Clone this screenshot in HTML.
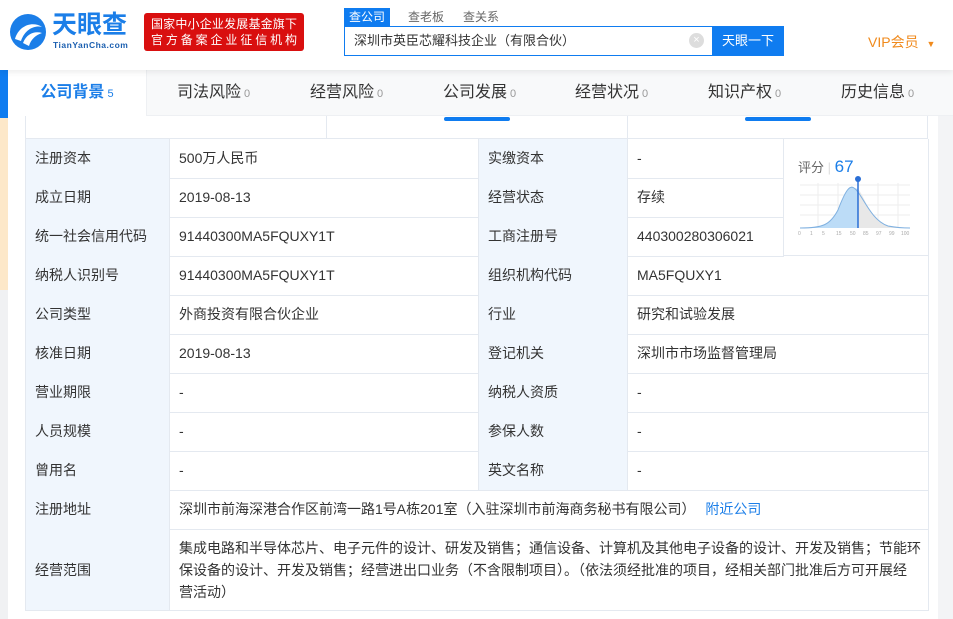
<!DOCTYPE html>
<html><head><meta charset="utf-8"><style>
*{margin:0;padding:0;box-sizing:border-box}
body{width:953px;height:619px;overflow:hidden;background:#f5f6f8;font-family:"Liberation Sans","Noto Sans CJK SC",sans-serif;color:#333;position:relative}
.a{position:absolute}
.hdr{left:0;top:0;width:953px;height:70px;background:#fff;box-shadow:0 2px 6px rgba(0,0,0,.08);z-index:5}
.nav{left:8px;top:70px;width:945px;height:46px;background:#f8f9fa;border-bottom:1px solid #eef0f3}
.tab{position:absolute;top:0;height:46px;line-height:46px;font-size:16px;color:#333}
.tab small{font-size:11px;color:#999;margin-left:3px}
.cell{position:absolute;font-size:14px;line-height:39px;padding-left:9px;border-right:1px solid #e4e9f0;border-bottom:1px solid #e4e9f0;color:#333;white-space:nowrap}
.lb{background:#f0f6fd}
.jl{display:block;text-align:justify;text-align-last:justify;width:146px;white-space:nowrap}
</style></head><body>
<div class="a hdr">
  <svg class="a" style="left:9px;top:13px" width="38" height="38" viewBox="0 0 38 38"><circle cx="19" cy="19" r="18" fill="#1b7ee8"/><path d="M6 26 C10 12 24 8 33 14 C26 12 16 16 12 28Z" fill="#fff"/><path d="M14 30 C18 20 26 18 33 20 C27 22 22 26 20 33Z" fill="#fff"/></svg>
  <div class="a" style="left:52px;top:11px;font-size:25px;font-weight:bold;color:#1b7ee8;line-height:28px">天眼查</div>
  <div class="a" style="left:53px;top:40px;font-size:8.5px;color:#1b5fb0;font-weight:bold;letter-spacing:0.5px">TianYanCha.com</div>
  <div class="a" style="left:144px;top:13px;width:160px;height:38px;background:#d90f0f;border-radius:3px;color:#fff;font-size:12px;line-height:16px;padding:3px 0 0 7px"><span class="jl">国家中小企业发展基金旗下</span><span class="jl">官方备案企业征信机构</span></div>
  <div class="a" style="left:344px;top:8px;width:46px;height:18px;background:#0f7cf0;color:#fff;font-size:12px;text-align:center;line-height:18px">查公司</div>
  <div class="a" style="left:408px;top:8px;font-size:12px;color:#666;line-height:18px">查老板</div>
  <div class="a" style="left:463px;top:8px;font-size:12px;color:#666;line-height:18px">查关系</div>
  <div class="a" style="left:344px;top:26px;width:370px;height:30px;border:1px solid #0f7cf0;background:#fff;font-size:13px;line-height:28px;padding-left:9px">深圳市英臣芯耀科技企业（有限合伙）</div>
  <div class="a" style="left:689px;top:33px;width:15px;height:15px;border-radius:50%;background:#ddd;color:#fff;font-size:11px;line-height:15px;text-align:center">×</div>
  <div class="a" style="left:712px;top:26px;width:72px;height:30px;background:#0f7cf0;color:#fff;font-size:13px;line-height:30px;text-align:center">天眼一下</div>
  <div class="a" style="left:868px;top:32px;font-size:14px;color:#f08a1c">VIP会员 <span style="font-size:9px;margin-left:4px">▼</span></div>
</div>
<div class="a" style="left:0;top:70px;width:8px;height:48px;background:#0f7cf0"></div>
<div class="a" style="left:0;top:118px;width:8px;height:172px;background:#fde8c9"></div>
<div class="a" style="left:0;top:290px;width:8px;height:329px;background:#f0f1f3"></div>
<div class="a" style="left:8px;top:116px;width:930px;height:503px;background:#fff"></div>
<div class="a" style="left:938px;top:70px;width:15px;height:549px;background:#f3f4f6"></div>
<div class="a nav">
  <div class="tab" style="left:0;width:139px;background:#fff;text-align:center;color:#1b7ee8;font-weight:bold;border-right:1px solid #eef0f3">公司背景<small style="color:#1b7ee8;font-weight:normal">5</small></div>
  <div class="tab" style="left:169px">司法风险<small>0</small></div>
  <div class="tab" style="left:302px">经营风险<small>0</small></div>
  <div class="tab" style="left:435px">公司发展<small>0</small></div>
  <div class="tab" style="left:567px">经营状况<small>0</small></div>
  <div class="tab" style="left:700px">知识产权<small>0</small></div>
  <div class="tab" style="left:833px">历史信息<small>0</small></div>
</div>
<div class="a" style="left:25px;top:116px;width:903px;height:23px;border-left:1px solid #e4e9f0;border-right:1px solid #e4e9f0;border-bottom:1px solid #e4e9f0"></div>
<div class="a" style="left:326px;top:116px;width:1px;height:23px;background:#e4e9f0"></div>
<div class="a" style="left:627px;top:116px;width:1px;height:23px;background:#e4e9f0"></div>
<div class="a" style="left:444px;top:117px;width:66px;height:4px;background:#0f7cf0;border-radius:2px"></div>
<div class="a" style="left:745px;top:117px;width:66px;height:4px;background:#0f7cf0;border-radius:2px"></div>
<div class="a" style="left:25px;top:139px;width:1px;height:472px;background:#e4e9f0"></div>

<div class="cell lb" style="left:26px;top:139px;width:144px">注册资本</div><div class="cell" style="left:170px;top:139px;width:309px">500万人民币</div><div class="cell lb" style="left:479px;top:139px;width:149px">实缴资本</div><div class="cell" style="left:628px;top:139px;width:156px">-</div>
<div class="cell lb" style="left:26px;top:178px;width:144px">成立日期</div><div class="cell" style="left:170px;top:178px;width:309px">2019-08-13</div><div class="cell lb" style="left:479px;top:178px;width:149px">经营状态</div><div class="cell" style="left:628px;top:178px;width:156px">存续</div>
<div class="cell lb" style="left:26px;top:217px;width:144px">统一社会信用代码</div><div class="cell" style="left:170px;top:217px;width:309px">91440300MA5FQUXY1T</div><div class="cell lb" style="left:479px;top:217px;width:149px">工商注册号</div><div class="cell" style="left:628px;top:217px;width:156px">440300280306021</div>
<div class="cell" style="left:784px;top:139px;width:145px;height:117px;padding:0"></div>
<div class="a" style="left:798px;top:157px;font-size:13px;color:#666">评分 <span style="color:#ddd">|</span> <span style="color:#1b7ee8;font-size:17px">67</span></div>
<svg class="a" style="left:798px;top:175px" width="115" height="62" viewBox="0 0 115 62">
<g stroke="#eee" stroke-width="1"><line x1="2" y1="10" x2="112" y2="10"/><line x1="2" y1="20" x2="112" y2="20"/><line x1="2" y1="30" x2="112" y2="30"/><line x1="2" y1="40" x2="112" y2="40"/><line x1="20" y1="8" x2="20" y2="53"/><line x1="40" y1="8" x2="40" y2="53"/><line x1="60" y1="8" x2="60" y2="53"/><line x1="80" y1="8" x2="80" y2="53"/><line x1="100" y1="8" x2="100" y2="53"/></g>
<path d="M2 53 C25 53 32 50 40 35 C48 14 52 10 56 13 L60 14 L60 53Z" fill="#bcdcf7"/>
<path d="M60 14 C66 20 72 45 90 51 C100 53 108 53 112 53 L60 53Z" fill="#e8e8e8"/>
<path d="M2 53 C25 53 32 50 40 35 C48 14 52 10 56 13 C64 18 72 45 90 51 C100 53 108 53 112 53" fill="none" stroke="#7fb0e0" stroke-width="1"/>
<line x1="60" y1="5" x2="60" y2="53" stroke="#2a6fd6" stroke-width="1.5"/><circle cx="60" cy="4" r="3" fill="#2a6fd6"/>
<g font-size="5" fill="#aaa" font-family="Liberation Sans"><text x="0" y="60">0</text><text x="12" y="60">1</text><text x="24" y="60">5</text><text x="38" y="60">15</text><text x="52" y="60">50</text><text x="65" y="60">85</text><text x="78" y="60">97</text><text x="91" y="60">99</text><text x="103" y="60">100</text></g>
</svg>

<div class="cell lb" style="left:26px;top:256px;width:144px">纳税人识别号</div><div class="cell" style="left:170px;top:256px;width:309px">91440300MA5FQUXY1T</div><div class="cell lb" style="left:479px;top:256px;width:149px">组织机构代码</div><div class="cell" style="left:628px;top:256px;width:301px">MA5FQUXY1</div>
<div class="cell lb" style="left:26px;top:295px;width:144px">公司类型</div><div class="cell" style="left:170px;top:295px;width:309px">外商投资有限合伙企业</div><div class="cell lb" style="left:479px;top:295px;width:149px">行业</div><div class="cell" style="left:628px;top:295px;width:301px">研究和试验发展</div>
<div class="cell lb" style="left:26px;top:334px;width:144px">核准日期</div><div class="cell" style="left:170px;top:334px;width:309px">2019-08-13</div><div class="cell lb" style="left:479px;top:334px;width:149px">登记机关</div><div class="cell" style="left:628px;top:334px;width:301px">深圳市市场监督管理局</div>
<div class="cell lb" style="left:26px;top:373px;width:144px">营业期限</div><div class="cell" style="left:170px;top:373px;width:309px">-</div><div class="cell lb" style="left:479px;top:373px;width:149px">纳税人资质</div><div class="cell" style="left:628px;top:373px;width:301px">-</div>
<div class="cell lb" style="left:26px;top:412px;width:144px">人员规模</div><div class="cell" style="left:170px;top:412px;width:309px">-</div><div class="cell lb" style="left:479px;top:412px;width:149px">参保人数</div><div class="cell" style="left:628px;top:412px;width:301px">-</div>
<div class="cell lb" style="left:26px;top:451px;width:144px">曾用名</div><div class="cell" style="left:170px;top:451px;width:309px">-</div><div class="cell lb" style="left:479px;top:451px;width:149px">英文名称</div><div class="cell" style="left:628px;top:451px;width:301px">-</div>
<div class="cell lb" style="left:26px;top:490px;width:144px">注册地址</div><div class="cell" style="left:170px;top:490px;width:759px">深圳市前海深港合作区前湾一路1号A栋201室（入驻深圳市前海商务秘书有限公司） <span style="color:#1b7ee8;margin-left:6px">附近公司</span></div>
<div class="cell lb" style="left:26px;top:529px;width:144px;height:82px;line-height:82px">经营范围</div>
<div class="cell" style="left:170px;top:529px;width:759px;height:82px;line-height:22px;white-space:normal;padding:8px 6px 0 9px">集成电路和半导体芯片、电子元件的设计、研发及销售；通信设备、计算机及其他电子设备的设计、开发及销售；节能环<br>保设备的设计、开发及销售；经营进出口业务（不含限制项目）。（依法须经批准的项目，经相关部门批准后方可开展经<br>营活动）</div>
</body></html>
